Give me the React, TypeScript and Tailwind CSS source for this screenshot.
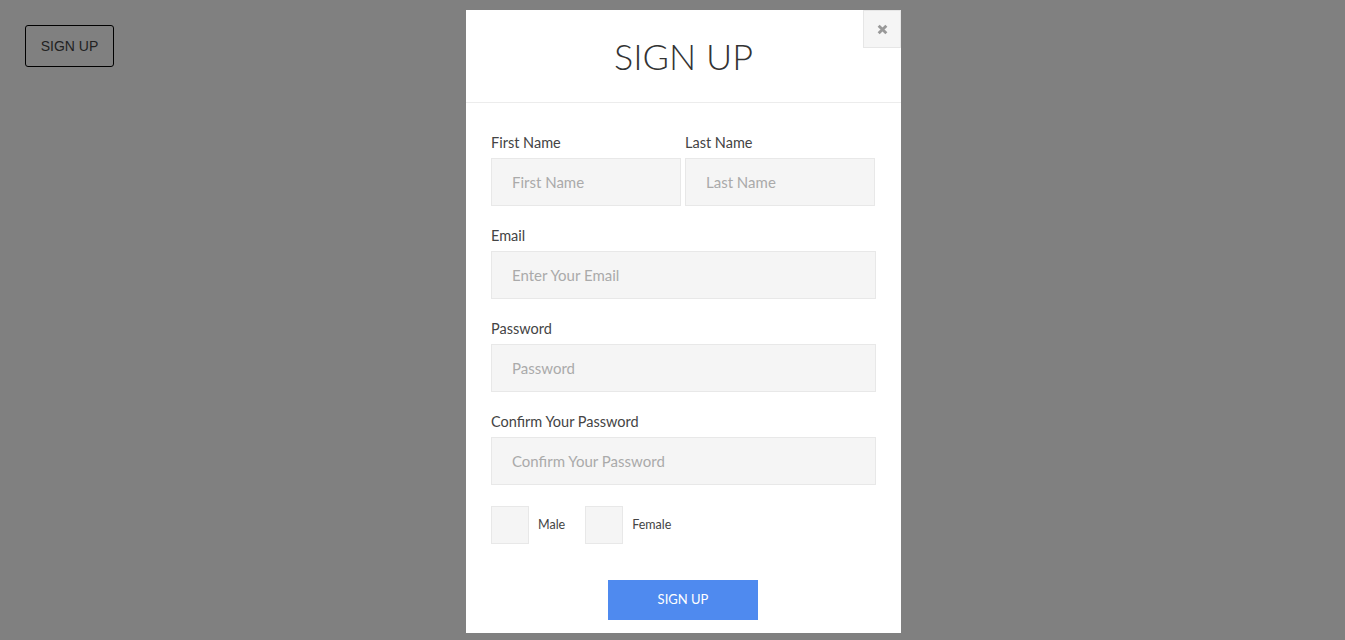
import { useState } from "react";

function Field({ label, placeholder, type = "text" }: { label: string; placeholder: string; type?: string }) {
  return (
    <label className="flex flex-col w-full">
      <span className="h-5 leading-5 text-[14.5px] text-[#444] mb-[5px]">{label}</span>
      <input
        type={type}
        placeholder={placeholder}
        className="h-12 w-full px-5 bg-[#f5f5f5] border border-[#e8e8e8] text-[15px] text-[#555] placeholder:text-[#aaa] outline-none"
      />
    </label>
  );
}

function Check({ label }: { label: string }) {
  return (
    <label className="flex items-center gap-[9px]">
      <span className="w-[38px] h-[38px] bg-[#f5f5f5] border border-[#e8e8e8]" />
      <span className="text-[12.5px] text-[#444]">{label}</span>
    </label>
  );
}

export default function App() {
  const [open, setOpen] = useState(true);

  return (
    <div className="relative w-full h-[640px] bg-[#808080] overflow-hidden font-['Lato','Liberation_Sans',sans-serif]">
      <div className="p-[25px]">
        <button
          onClick={() => setOpen(true)}
          className="w-[89px] h-[42px] border border-black rounded-[3px] text-[14px] text-[#222] font-['Liberation_Sans',Arial,sans-serif]">
          SIGN UP
        </button>
      </div>

      {open && (
        <div className="absolute left-[466px] top-[10px] w-[435px] bg-white">
          <div className="relative h-[93px] border-b border-[#ececec] flex items-center justify-center">
            <h1 className="text-[36px] font-light text-[#333] leading-none">SIGN UP</h1>
            <button
              onClick={() => setOpen(false)}
              className="absolute right-0 top-0 w-[38px] h-[38px] bg-[#f5f5f5] border border-[#e6e6e6] flex items-center justify-center">
              <svg width="11" height="11" viewBox="0 0 10 10">
                <path d="M1.5 1.5 L8.5 8.5 M8.5 1.5 L1.5 8.5" stroke="#999" strokeWidth="2.6" strokeLinecap="butt" />
              </svg>
            </button>
          </div>

          <form
            onSubmit={(e) => e.preventDefault()}
            className="px-[25px] pt-[30px] pb-[13px] flex flex-col">
            <div className="flex gap-1 mb-5 pr-px">
              <Field label="First Name" placeholder="First Name" />
              <Field label="Last Name" placeholder="Last Name" />
            </div>
            <div className="mb-5">
              <Field label="Email" placeholder="Enter Your Email" type="email" />
            </div>
            <div className="mb-5">
              <Field label="Password" placeholder="Password" type="password" />
            </div>
            <div className="mb-[21px]">
              <Field label="Confirm Your Password" placeholder="Confirm Your Password" type="password" />
            </div>
            <div className="flex gap-5 mb-9">
              <Check label="Male" />
              <Check label="Female" />
            </div>
            <div className="flex justify-center pr-px">
              <button className="w-[150px] h-10 bg-[#4f8aef] text-white text-[13px]">SIGN UP</button>
            </div>
          </form>
        </div>
      )}
    </div>
  );
}
